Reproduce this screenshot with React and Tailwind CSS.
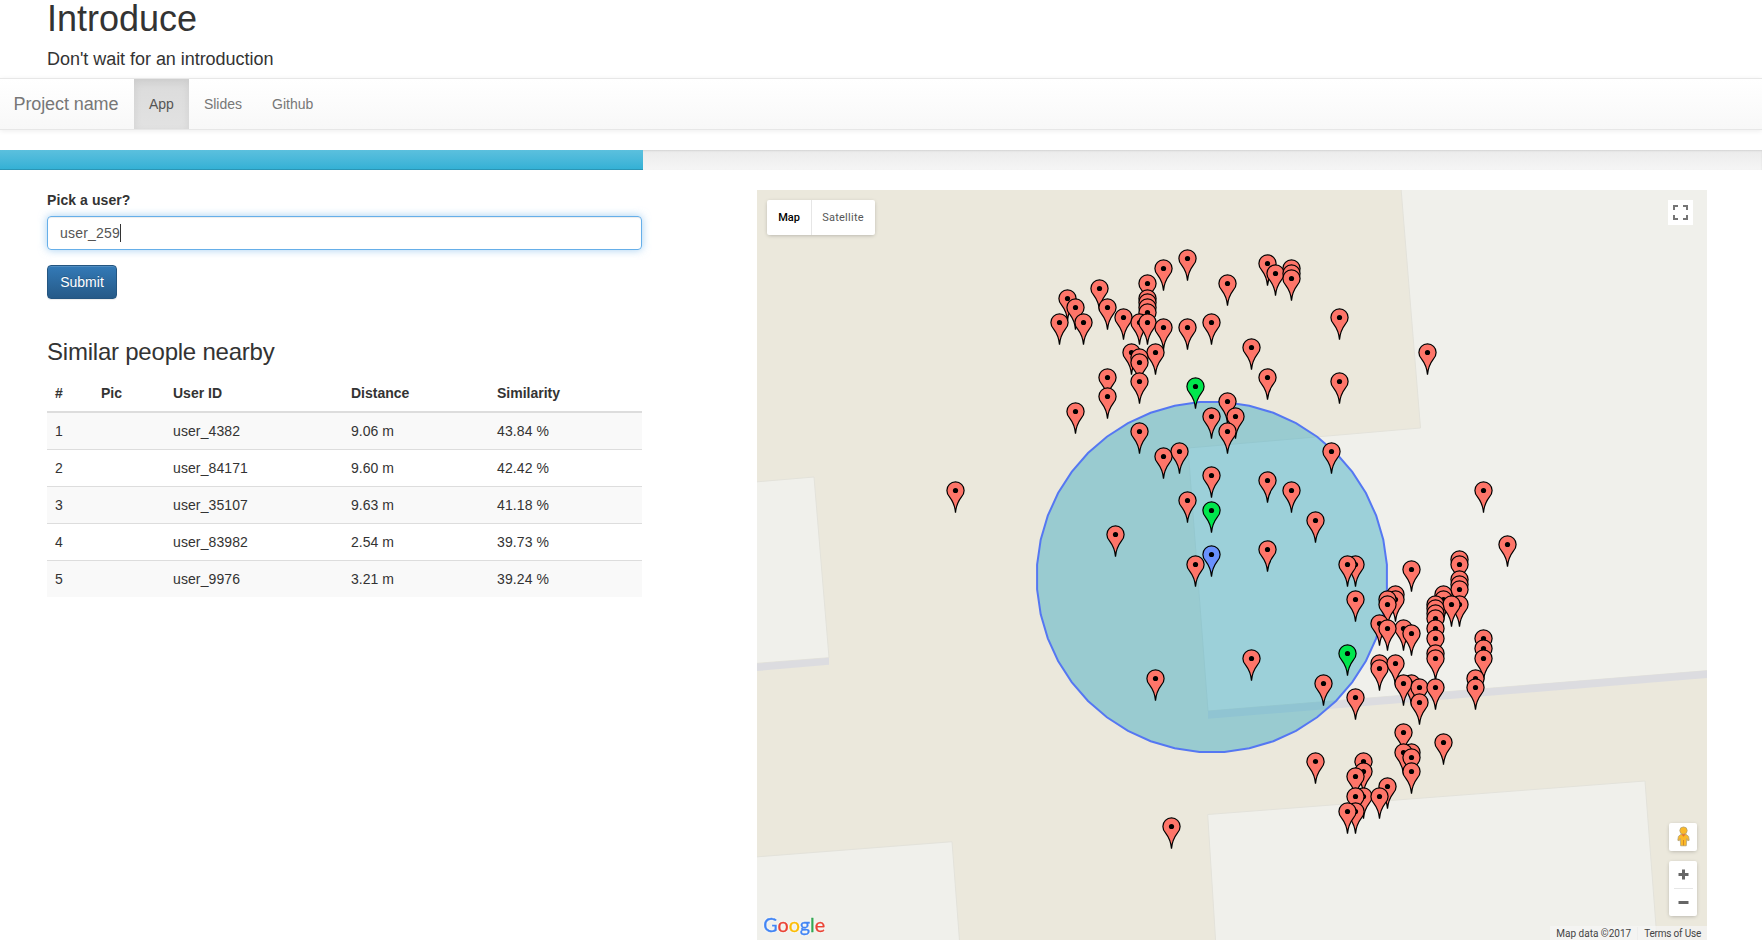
import React from "react";

const navItems = [
  { label: "App", active: true },
  { label: "Slides", active: false },
  { label: "Github", active: false },
];

const people = [
  ["1", "user_4382", "9.06 m", "43.84 %"],
  ["2", "user_84171", "9.60 m", "42.42 %"],
  ["3", "user_35107", "9.63 m", "41.18 %"],
  ["4", "user_83982", "2.54 m", "39.73 %"],
  ["5", "user_9976", "3.21 m", "39.24 %"],
];

const RED = "#fe7569";
const GREEN = "#00e64d";
const BLUE = "#6991fd";

// Head centres of the map pins, in map pixels. Later pins lie over earlier ones.
const redPins = [
  [430, 68], [510, 73], [406, 78], [534, 78], [518, 83], [534, 83], [534, 88],
  [390, 93], [470, 93], [342, 98], [310, 108], [390, 108], [390, 112],
  [318, 117], [350, 117], [390, 117], [390, 122], [366, 127], [582, 127],
  [302, 132], [326, 132], [382, 132], [390, 132], [454, 132],
  [406, 137], [430, 137], [494, 157], [374, 162], [398, 162], [670, 162],
  [382, 167], [382, 172], [350, 187], [510, 187], [382, 191], [582, 191],
  [350, 206], [470, 211], [318, 221], [454, 226], [478, 226], [470, 241],
  [382, 241], [422, 261], [574, 261], [406, 266], [454, 285], [510, 290],
  [198, 300], [534, 300], [726, 300], [430, 310], [558, 330], [358, 344],
  [750, 354], [510, 359], [702, 369], [438, 374], [598, 374], [590, 374],
  [702, 374], [654, 379], [702, 389], [702, 394], [702, 399],
  [638, 404], [686, 404], [598, 409], [638, 409], [630, 409], [686, 409],
  [630, 414], [678, 414], [702, 414], [694, 414], [678, 418], [678, 423],
  [678, 428], [622, 433], [646, 438], [630, 438], [678, 438], [654, 443],
  [678, 448], [726, 448], [726, 458], [678, 463], [494, 468], [678, 468],
  [726, 468], [622, 473], [638, 473], [622, 478], [398, 488], [718, 488],
  [566, 493], [654, 493], [646, 493], [662, 497], [678, 497], [718, 497],
  [598, 507], [662, 512], [646, 542], [686, 552], [654, 562], [646, 562],
  [654, 567], [558, 571], [606, 571], [606, 581], [654, 581], [598, 586],
  [630, 596], [606, 606], [598, 606], [622, 606], [598, 621], [590, 621],
  [414, 636],
];
const greenPins = [[438, 196], [454, 320], [590, 463]];
const bluePins = [[454, 364]];

// The search radius is drawn as a many-sided ring.
const SIDES = 44;
const ring = Array.from({ length: SIDES }, (_, i) => {
  const a = ((i + 0.5) * 2 * Math.PI) / SIDES;
  return `${(455 + 175.3 * Math.cos(a)).toFixed(1)},${(387 + 175.3 * Math.sin(a)).toFixed(1)}`;
}).join(" ");

function Pin({ x, y, fill }) {
  return (
    <g transform={`translate(${x + 0.5} ${y + 0.5})`}>
      <path
        d="M0 22.2 C-0.5 15.5 -2.6 10.8 -6 6.4 C-7.8 4.3 -8.6 2.4 -8.6 0 A8.6 8.6 0 0 1 8.6 0 C8.6 2.4 7.8 4.3 6 6.4 C2.6 10.8 0.5 15.5 0 22.2 Z"
        fill={fill}
        stroke="#000"
        strokeWidth="1.2"
      />
      <circle r="2.6" fill="#000" />
    </g>
  );
}

function MapCanvas() {
  return (
    <svg className="block h-[750px] w-[950px]" viewBox="0 0 950 750">
      <rect width="950" height="750" fill="#ebe8dc" />
      <g fill="#f0f0eb" stroke="#e3e2da" strokeWidth="1">
        <path d="M-2 292 L57 287 L72 467.7 L-2 473.5 Z" />
        <path d="M-2 667 L195 651.7 L202.6 752 L-2 752 Z" />
        <path d="M644 -2 L663.5 238 L431 258 L451 521 L952 480.5 L952 -2 Z" />
        <path d="M450.7 624.5 L888 591 L900.2 752 L458.7 752 Z" />
      </g>
      <path d="M0 473.5 L72 467.7 V474.7 L0 481 Z" fill="#dcdce0" />
      <path d="M451 521 L950 480.5 V488 L451 528.7 Z" fill="#dcdce0" />
      <polygon points={ring} fill="#1ea0be" fillOpacity="0.4" stroke="#5577f2" strokeWidth="2" />
      {redPins.map(([x, y], i) => <Pin key={i} x={x} y={y} fill={RED} />)}
      {greenPins.map(([x, y], i) => <Pin key={i} x={x} y={y} fill={GREEN} />)}
      {bluePins.map(([x, y], i) => <Pin key={i} x={x} y={y} fill={BLUE} />)}
    </svg>
  );
}

function Pegman() {
  return (
    <svg className="h-[21px] w-[13px]" viewBox="0 0 13 21">
      <path d="M3.6 8.6 L1.4 10.4 L0.8 14.3 L2.2 14.8 L3.3 12.6 L3.6 19.8 H9.3 L9.7 12.6 L10.8 14.8 L12.2 14.3 L11.6 10.4 L9.4 8.6 Z" fill="#fbb929" stroke="#a99b72" strokeWidth="0.7" />
      <circle cx="6.5" cy="4.6" r="3.7" fill="#fbb929" stroke="#a99b72" strokeWidth="0.7" />
      <path d="M4.4 8.2 H8.6 L6.5 10.8 Z" fill="#e8742c" />
      <path d="M6.5 14 V19.5" stroke="#d58d22" strokeWidth="1" />
    </svg>
  );
}

const logoLetters = [
  ["G", "#4285f4"],
  ["o", "#ea4335"],
  ["o", "#fbbc05"],
  ["g", "#4285f4"],
  ["l", "#34a853"],
  ["e", "#ea4335"],
];

function MapPanel() {
  return (
    <div className="relative h-[750px] w-[950px] overflow-hidden font-[Roboto,sans-serif]">
      <MapCanvas />

      <div className="absolute left-[10px] top-[10px] flex h-[35px] rounded-[2px] bg-white text-[11px] leading-[35px] shadow-[0_1px_4px_-1px_rgba(0,0,0,0.3)]">
        <div className="w-[44px] text-center font-medium text-black">Map</div>
        <div className="w-[64px] border-l border-[#e6e6e6] pr-px text-center tracking-[0.25px] text-[#565656]">Satellite</div>
      </div>

      <div className="absolute left-[911px] top-[10px] flex h-[25px] w-[25px] items-center justify-center bg-white">
        <svg className="h-[15px] w-[15px]" viewBox="0 0 15 15" fill="none" stroke="#757575" strokeWidth="2">
          <path d="M1 5 V1 H5 M10 1 H14 V5 M14 10 V14 H10 M5 14 H1 V10" />
        </svg>
      </div>

      <div className="absolute left-[912px] top-[633px] flex flex-col gap-[10px]">
        <div className="flex h-[28px] w-[28px] items-center justify-center rounded-[2px] bg-white pb-px shadow-[0_1px_4px_-1px_rgba(0,0,0,0.3)]">
          <Pegman />
        </div>
        <div className="flex h-[55px] w-[28px] flex-col items-center rounded-[2px] bg-white shadow-[0_1px_4px_-1px_rgba(0,0,0,0.3)]">
          <svg className="h-[27px] w-[28px]" viewBox="0 0 28 27">
            <path d="M9.5 13.5 H19.5 M14.5 8.5 V18.5" stroke="#666" strokeWidth="3" />
          </svg>
          <div className="h-px w-[19px] bg-[#e6e6e6]" />
          <svg className="h-[27px] w-[28px]" viewBox="0 0 28 27">
            <path d="M9.5 13.5 H19.5" stroke="#666" strokeWidth="3" />
          </svg>
        </div>
      </div>

      <svg className="absolute left-[3px] top-[722px] h-[28px] w-[72px] [filter:drop-shadow(0_0_1px_#fff)]" viewBox="0 0 72 28">
        <text
          x="3.2"
          y="20.4"
          textLength="62"
          lengthAdjust="spacingAndGlyphs"
          fontFamily="Lato, sans-serif"
          fontSize="20"
          strokeWidth="0.3"
        >
          {logoLetters.map(([letter, color], i) => (
            <tspan key={i} fill={color} stroke={color}>{letter}</tspan>
          ))}
        </text>
      </svg>

      <div className="absolute bottom-0 right-0 flex h-[14px] whitespace-nowrap bg-[#f5f5f5]/70 pt-px text-[10px] leading-[14px] text-[#444]">
        <span className="px-[6px]">Map data ©2017</span>
        <span className="border-l border-[#eeeeec] px-[6px] tracking-[-0.2px]">Terms of Use</span>
      </div>
    </div>
  );
}

export default function App() {
  return (
    <div className="h-[949px] w-[1762px] bg-white font-['Liberation_Sans',Arial,sans-serif] text-[14px] leading-[20px] text-[#333]">
      <header className="h-[78px] px-[47px]">
        <h1 className="text-[36px] leading-[37px]">Introduce</h1>
        <h4 className="mt-[12px] text-[18px] leading-[20px] tracking-[-0.04px]">Don't wait for an introduction</h4>
      </header>

      <nav className="flex h-[52px] border-y border-[#e7e7e7] bg-linear-to-b from-white to-[#f8f8f8] text-[#777] shadow-[0_1px_5px_rgba(0,0,0,0.075)]">
        <a className="w-[134px] py-[15px] pl-[13.5px] text-[18px] leading-[20px] tracking-[-0.1px]">Project name</a>
        {navItems.map(({ label, active }) => (
          <a
            key={label}
            className={
              active
                ? "bg-linear-to-b from-[#dbdbdb] to-[#e2e2e2] px-[15px] py-[15px] text-[#555] shadow-[inset_0_3px_9px_rgba(0,0,0,0.075)]"
                : "px-[15px] py-[15px]"
            }
          >
            {label}
          </a>
        ))}
      </nav>

      <div className="mt-[20px] h-[20px] bg-linear-to-b from-[#ebebeb] to-[#f5f5f5] shadow-[inset_0_1px_2px_rgba(0,0,0,0.1)]">
        <div className="h-full w-[643px] bg-linear-to-b from-[#5bc0de] to-[#31b0d5] shadow-[inset_0_-1px_0_rgba(0,0,0,0.15)]" />
      </div>

      <main className="flex pl-[47px] pt-[20px]">
        <section className="w-[595px] shrink-0">
          <label className="block font-bold tracking-[0.08px]">Pick a user?</label>
          <div className="mt-[6px] flex h-[34px] items-center rounded-[4px] border border-[#66afe9] px-[12px] text-[#555] shadow-[inset_0_1px_1px_rgba(0,0,0,0.075),0_0_8px_rgba(102,175,233,0.6)]">
            <span className="tracking-[0.2px]">user_259</span>
            <span className="h-[18px] w-px bg-[#333]" />
          </div>
          <button className="mt-[15px] block h-[34px] w-[70px] rounded-[4px] border border-[#245580] bg-linear-to-b from-[#337ab7] to-[#265a88] text-white shadow-[inset_0_1px_0_rgba(255,255,255,0.15),0_1px_1px_rgba(0,0,0,0.075)] [text-shadow:0_-1px_0_rgba(0,0,0,0.2)]">
            Submit
          </button>

          <h3 className="mt-[39px] text-[24px] leading-[27px] tracking-[-0.22px]">Similar people nearby</h3>
          <table className="mt-[10px] w-[595px] table-fixed border-collapse text-left">
            <colgroup>
              <col className="w-[46px]" />
              <col className="w-[72px]" />
              <col className="w-[178px]" />
              <col className="w-[146px]" />
              <col className="w-[153px]" />
            </colgroup>
            <thead>
              <tr className="border-b-2 border-[#ddd]">
                {["#", "Pic", "User ID", "Distance", "Similarity"].map((h) => (
                  <th key={h} className="p-[8px] font-bold">{h}</th>
                ))}
              </tr>
            </thead>
            <tbody>
              {people.map(([n, id, distance, similarity]) => (
                <tr key={n} className="h-[37px] border-t border-[#ddd] odd:bg-[#f9f9f9] first:border-t-0">
                  <td className="px-[8px]">{n}</td>
                  <td className="px-[8px]" />
                  <td className="px-[8px] tracking-[0.1px]">{id}</td>
                  <td className="px-[8px]">{distance}</td>
                  <td className="px-[8px] tracking-[0.1px]">{similarity}</td>
                </tr>
              ))}
            </tbody>
          </table>
        </section>

        <section className="ml-[115px]">
          <MapPanel />
        </section>
      </main>
    </div>
  );
}
